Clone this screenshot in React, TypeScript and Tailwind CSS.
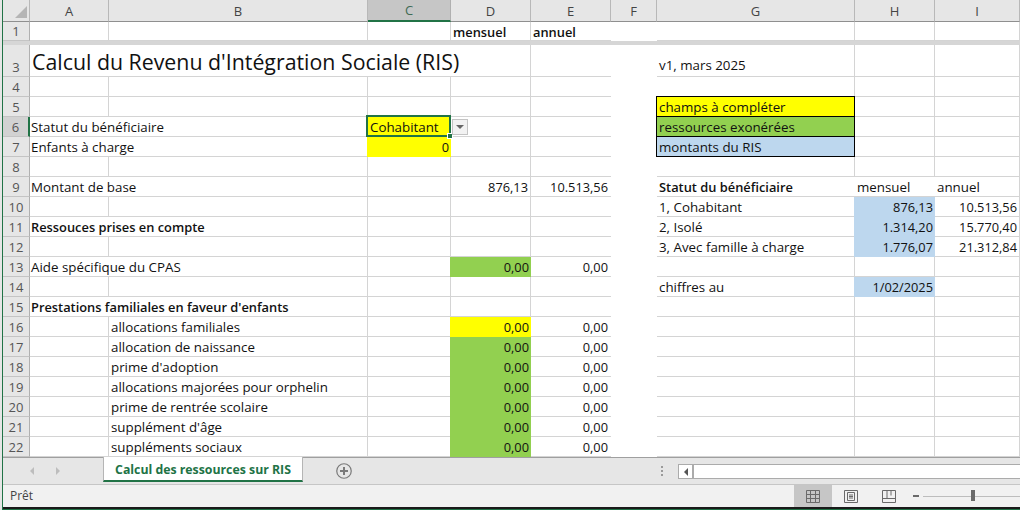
import React from 'react';

type Cell = { t?: string; r?: boolean; b?: boolean; bg?: string; span?: number; big?: boolean; up?: boolean; low?: boolean; noR?: boolean };
type Row = { n: number; h?: string; sel?: boolean; cells: Record<string, Cell> };

const COLS = ['A', 'B', 'C', 'D', 'E', 'F', 'G', 'H', 'I'];
const Y = 'bg-[#ffff00]';
const G = 'bg-[#92d050]';
const B = 'bg-[#bdd7ee]';

const money = (m: string, a: string, bg: string): Record<string, Cell> => ({
  D: { t: m, r: true, bg },
  E: { t: a, r: true },
});

const rows: Row[] = [
  { n: 3, cells: { A: { t: "Calcul du Revenu d'Intégration Sociale (RIS)", span: 4, big: true }, G: { t: 'v1, mars 2025', up: true } } },
  { n: 4, cells: {} },
  { n: 5, cells: { G: { t: 'champs à compléter', bg: Y } } },
  { n: 6, sel: true, cells: { A: { t: 'Statut du bénéficiaire', span: 2 }, C: { t: 'Cohabitant', bg: Y }, G: { t: 'ressources exonérées', bg: G } } },
  { n: 7, cells: { A: { t: 'Enfants à charge', span: 2 }, C: { t: '0', r: true, bg: Y }, G: { t: 'montants du RIS', bg: B } } },
  { n: 8, cells: {} },
  { n: 9, cells: { A: { t: 'Montant de base', span: 2 }, D: { t: '876,13', r: true }, E: { t: '10.513,56', r: true }, G: { t: 'Statut du bénéficiaire', b: true, noR: true }, H: { t: 'mensuel', noR: true }, I: { t: 'annuel' } } },
  { n: 10, cells: { G: { t: '1, Cohabitant' }, H: { t: '876,13', r: true, bg: B }, I: { t: '10.513,56', r: true } } },
  { n: 11, cells: { A: { t: 'Ressouces prises en compte', b: true, span: 2 }, G: { t: '2, Isolé' }, H: { t: '1.314,20', r: true, bg: B }, I: { t: '15.770,40', r: true } } },
  { n: 12, cells: { G: { t: '3, Avec famille à charge' }, H: { t: '1.776,07', r: true, bg: B }, I: { t: '21.312,84', r: true } } },
  { n: 13, cells: { A: { t: 'Aide spécifique du CPAS', span: 2 }, ...money('0,00', '0,00', G) } },
  { n: 14, cells: { G: { t: 'chiffres au' }, H: { t: '1/02/2025', r: true, bg: B } } },
  { n: 15, cells: { A: { t: "Prestations familiales en faveur d'enfants", b: true, span: 2 } } },
  { n: 16, cells: { B: { t: 'allocations familiales' }, ...money('0,00', '0,00', Y) } },
  { n: 17, cells: { B: { t: 'allocation de naissance' }, ...money('0,00', '0,00', G) } },
  { n: 18, cells: { B: { t: "prime d'adoption" }, ...money('0,00', '0,00', G) } },
  { n: 19, cells: { B: { t: 'allocations majorées pour orphelin' }, ...money('0,00', '0,00', G) } },
  { n: 20, cells: { B: { t: 'prime de rentrée scolaire' }, ...money('0,00', '0,00', G) } },
  { n: 21, cells: { B: { t: "supplément d'âge" }, ...money('0,00', '0,00', G) } },
  { n: 22, cells: { B: { t: 'suppléments sociaux' }, ...money('0,00', '0,00', G) } },
];

function RowHead({ n, sel, h }: { n: number; sel?: boolean; h: string }) {
  return (
    <div
      className={`${h} flex items-end justify-center text-[13px] leading-[18px] text-[#555] border-b border-b-[#c4c4c4] ${
        sel ? 'bg-[#d2d2d2] border-r-2 border-r-[#217346]' : 'bg-[#e6e6e6] border-r border-r-[#b0b0b0]'
      }`}
    >
      {n}
    </div>
  );
}

function GridCell({ col, cell, h, rowN }: { col: string; cell?: Cell; h: string; rowN: number }) {
  const c = cell ?? {};
  const span = c.span === 4 ? 'col-span-4' : c.span === 2 ? 'col-span-2' : '';
  if (col === 'F') return <div className={`${h} bg-white`} />;
  const legend = col === 'G' && rowN >= 5 && rowN <= 7;
  const filled = !!c.bg && !legend;
  const border = legend
    ? `border border-black ml-[-1px] ${rowN > 5 ? 'border-t-0' : 'mt-[-1px]'}`
    : filled
    ? 'ml-[-1px]'
    : col === 'E' || c.noR
    ? 'border-b border-b-[#d4d4d4]'
    : 'border-b border-r border-b-[#d4d4d4] border-r-[#d4d4d4]';
  const tall = legend && rowN === 5 ? 'h-[21px]' : h;
  const vpos = c.big ? 'items-center pt-[3px]' : c.up ? 'items-end pb-[2px]' : c.low ? 'items-end' : filled ? 'items-end pb-[1px]' : 'items-end';
  const size = c.big ? 'text-[21.33px]' : c.b ? 'text-[12.85px]' : c.r ? 'text-[12.8px]' : 'text-[13.33px]';
  const pad = c.r
    ? col === 'E'
      ? 'justify-end pr-[3px]'
      : 'justify-end pr-[2px]'
    : c.big
    ? 'pl-[2px]'
    : col === 'A'
    ? 'pl-[1px]'
    : filled
    ? 'pl-[3px]'
    : 'pl-[2px]';
  return (
    <div
      className={`${tall} ${span} ${border} ${c.bg ?? 'bg-white'} flex ${vpos} whitespace-nowrap overflow-visible ${pad} ${
        c.b ? 'font-semibold' : ''
      } ${size} ${c.low ? 'leading-[16px]' : 'leading-[18px]'} text-[#111]`}
    >
      {c.t}
    </div>
  );
}

function renderCells(r: Row, h: string) {
  const out: React.ReactNode[] = [];
  let skip = 0;
  for (const col of COLS) {
    if (skip > 0) {
      skip--;
      continue;
    }
    const cell = r.cells[col];
    if (cell?.span) skip = cell.span - 1;
    out.push(<GridCell key={col} col={col} cell={cell} h={h} rowN={r.n} />);
  }
  return out;
}

function ColHead({ label, sel }: { label: string; sel?: boolean }) {
  return (
    <div
      className={`h-[22px] flex items-center justify-center pt-[2px] text-[13px] ${
        sel
          ? 'bg-[#c6c6c6] border-b-2 border-b-[#217346] border-r border-r-[#b0b0b0] text-[#3f6a55]'
          : 'bg-[#e6e6e6] border-b border-b-[#8f8f8f] border-r border-r-[#b8b8b8] text-[#444]'
      }`}
    >
      {label}
    </div>
  );
}

export default function App() {
  return (
    <div className="w-[1020px] h-[510px] overflow-hidden bg-[#e6e6e6] pl-[2px] font-['Open_Sans','Liberation_Sans',sans-serif]">
      <div className="h-full border-l border-l-[#217346] flex flex-col">
        <div className="relative grid grid-cols-[27px_79px_259px_83px_80px_80px_46px_198px_80px_85px] h-[457px] overflow-hidden">
          {/* header */}
          <div className="h-[22px] bg-[#e6e6e6] border-b border-b-[#8f8f8f] border-r border-r-[#b8b8b8] flex items-end justify-end pb-[3px] pr-[2px]">
            <svg width="12" height="12" viewBox="0 0 12 12">
              <polygon points="12,0 12,12 0,12" fill="#b5b5b5" />
            </svg>
          </div>
          {COLS.map((c) => (
            <ColHead key={c} label={c} sel={c === 'C'} />
          ))}

          {/* row 1 */}
          <RowHead n={1} h="h-[19px]" />
          <GridCell col="A" h="h-[19px]" rowN={1} />
          <GridCell col="B" h="h-[19px]" rowN={1} />
          <GridCell col="C" h="h-[19px]" rowN={1} />
          <GridCell col="D" h="h-[19px]" rowN={1} cell={{ t: 'mensuel', b: true, low: true }} />
          <GridCell col="E" h="h-[19px]" rowN={1} cell={{ t: 'annuel', b: true, low: true }} />
          <GridCell col="F" h="h-[19px]" rowN={1} />
          <GridCell col="G" h="h-[19px]" rowN={1} />
          <GridCell col="H" h="h-[19px]" rowN={1} />
          <GridCell col="I" h="h-[19px]" rowN={1} />

          {/* freeze pane line */}
          <div className="col-span-10 h-[4px] bg-[#d6d6d6]" />

          {rows.map((r) => {
            const h = r.n === 3 ? 'h-[32px]' : 'h-[20px]';
            return (
              <React.Fragment key={r.n}>
                <RowHead n={r.n} sel={r.sel} h={h} />
                {renderCells(r, h)}
              </React.Fragment>
            );
          })}

          {/* selection + dropdown overlay */}
          <div className="absolute left-[363px] top-[115px] w-[85px] h-[22px] border-2 border-[#217346] pointer-events-none">
            <div className="absolute right-[-4px] bottom-[-4px] w-[6px] h-[6px] bg-[#217346] border border-white" />
          </div>
          <div className="absolute left-[449px] top-[119px] w-[16px] h-[16px] bg-[#f2f2f2] border border-[#c4c4c4] flex items-center justify-center">
            <div className="w-0 h-0 border-l-[4px] border-r-[4px] border-t-[4px] border-l-transparent border-r-transparent border-t-[#666]" />
          </div>
        </div>

        {/* tab bar */}
        <div className="h-[28px] bg-[#e6e6e6] border-t border-t-[#9f9f9f] border-b border-b-[#c6c6c6] flex items-start">
          <div className="w-[100px] h-full flex items-center pl-[27px] gap-[22px]">
            <div className="w-0 h-0 border-y-[4px] border-r-[4px] border-y-transparent border-r-[#bdbdbd]" />
            <div className="w-0 h-0 border-y-[4px] border-l-[4px] border-y-transparent border-l-[#bdbdbd]" />
          </div>
          <div className="w-[200px] h-[25px] mt-[-1px] pt-[3px] bg-white border-x border-x-[#b5b5b5] border-b-2 border-b-[#217346] flex items-center justify-center text-[12.3px] font-bold text-[#217346] whitespace-nowrap">
            Calcul des ressources sur RIS
          </div>
          <div className="w-[357px] h-full flex items-center pl-[33px]">
            <svg width="16" height="16" viewBox="0 0 16 16" fill="none" stroke="#7a7a7a">
              <circle cx="8" cy="8" r="7.25" strokeWidth="1.2" />
              <path d="M8 4v8M4 8h8" strokeWidth="2" />
            </svg>
          </div>
          <div className="w-[4px] h-full flex flex-col items-center justify-center gap-[2px] mr-[14px]">
            <div className="w-[2px] h-[2px] bg-[#9a9a9a]" />
            <div className="w-[2px] h-[2px] bg-[#9a9a9a]" />
            <div className="w-[2px] h-[2px] bg-[#9a9a9a]" />
          </div>
          <div className="flex-1 h-[15px] mt-[6px] bg-white border-y border-y-[#ababab] border-l border-l-[#ababab] flex">
            <div className="w-[15px] h-full border-r-2 border-r-[#ababab] flex items-center justify-center">
              <div className="w-0 h-0 border-y-[4px] border-r-[4px] border-y-transparent border-r-[#555]" />
            </div>
          </div>
        </div>

        {/* status bar */}
        <div className="h-[22px] bg-[#f1f1f1] flex items-center text-[12px] text-[#444]">
          <span className="pl-[7px] w-[791px]">Prêt</span>
          <div className="w-[38px] h-full bg-[#c6c6c6] flex items-center justify-center">
            <svg width="14" height="13" viewBox="0 0 14 13" fill="none" stroke="#6a6a6a">
              <path d="M.5.5h13v12H.5zM.5 4.5h13M.5 8.5h13M4.5.5v12M9.5.5v12" />
            </svg>
          </div>
          <div className="w-[38px] h-full flex items-center justify-center">
            <svg width="14" height="13" viewBox="0 0 14 13" fill="none" stroke="#6a6a6a">
              <path d="M.5.5h13v12H.5zM3.5 2.5h7v8h-7zM5 5h4M5 6.5h4M5 8h4" />
            </svg>
          </div>
          <div className="w-[38px] h-full flex items-center justify-center">
            <svg width="14" height="13" viewBox="0 0 14 13" fill="none" stroke="#6a6a6a">
              <path d="M.5.5h13v12H.5zM.5 8.5h13M5 .5v8M9 .5v5" />
            </svg>
          </div>
          <div className="relative flex-1 h-full flex items-center pl-[5px]">
            <div className="w-[6px] h-[2px] bg-[#6a6a6a] mr-[4px]" />
            <div className="flex-1 h-px bg-[#bdbdbd]" />
            <div className="absolute left-[63px] top-[5px] w-[4px] h-[11px] bg-[#6a6a6a]" />
          </div>
        </div>

        <div className="h-[2px] bg-[#1a1a1a]" />
        <div className="h-px bg-[#217346]" />
      </div>
    </div>
  );
}
